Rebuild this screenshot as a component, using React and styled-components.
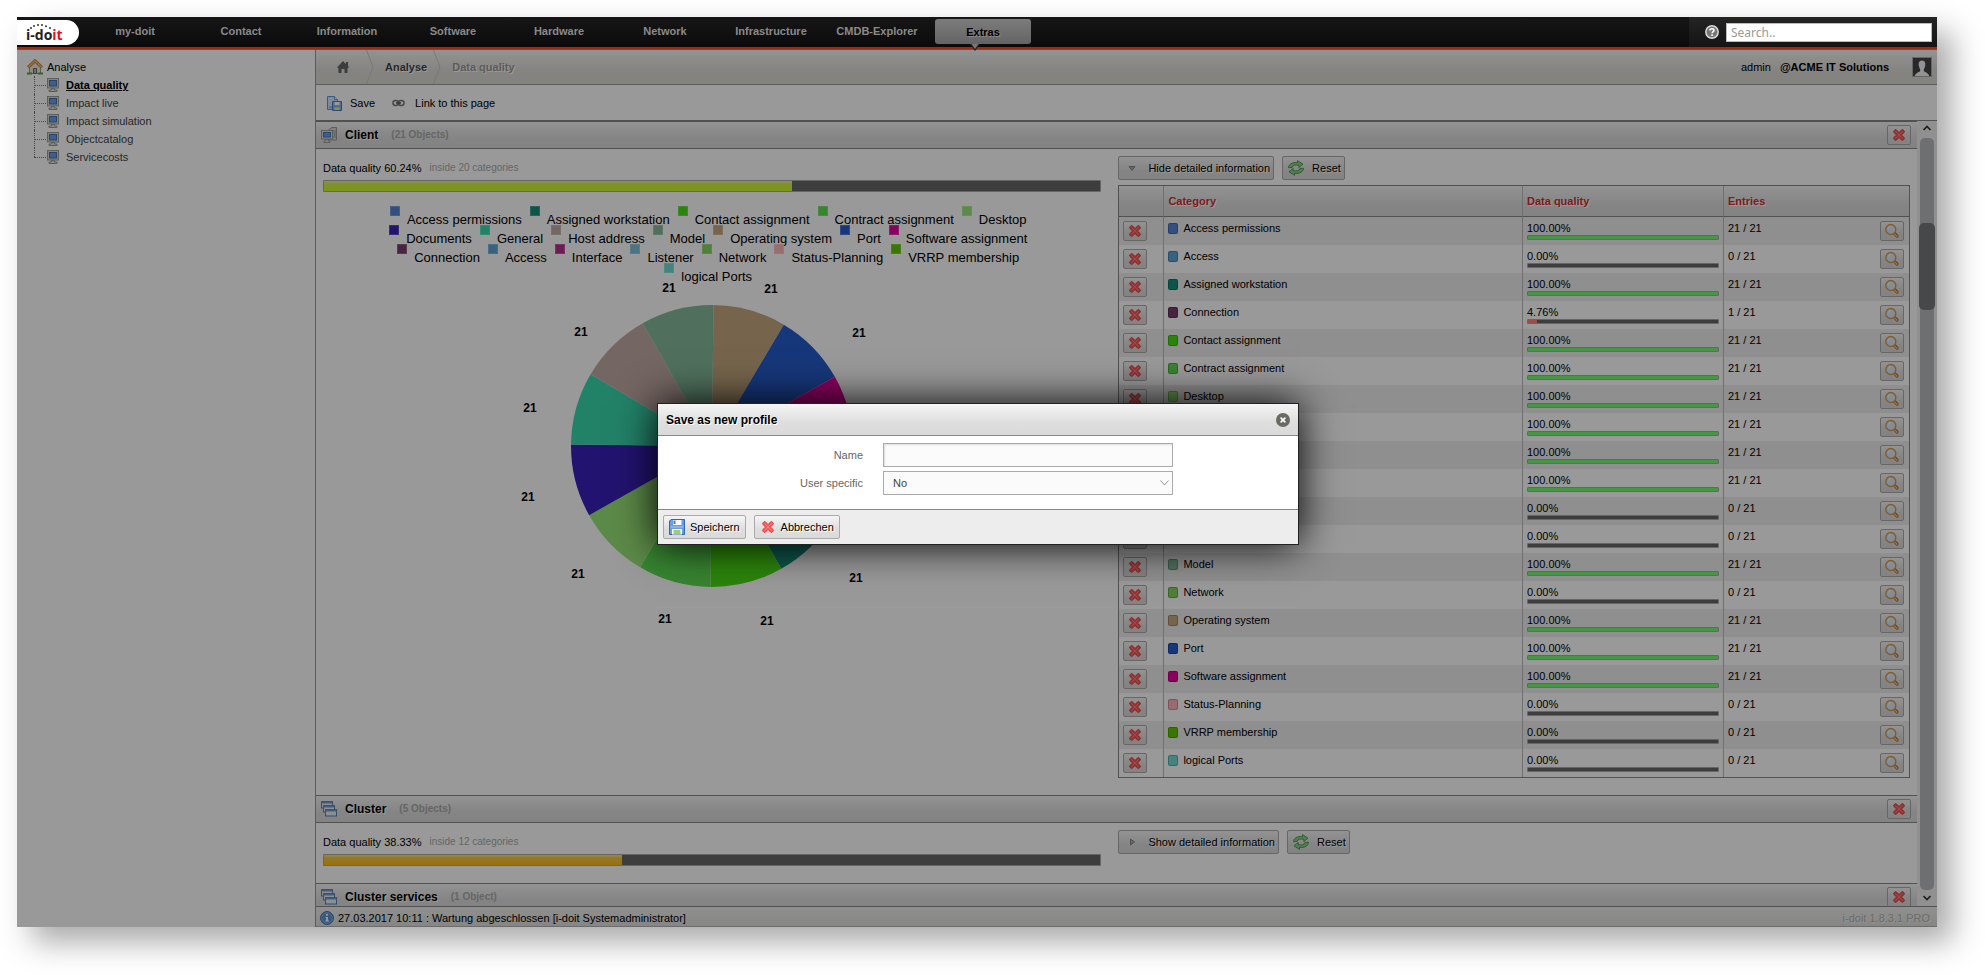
import React from "react";
import styled, { createGlobalStyle, css } from "styled-components";

const GlobalStyle = createGlobalStyle`
  *, *::before, *::after { box-sizing: border-box; }
  body {
    margin: 0;
    background: #fff;
    color: #000;
    font: 11px/18px "Liberation Sans", Arial, Helvetica, sans-serif;
  }
  svg { display: block; flex: none; }
  button, input, select { font: inherit; color: inherit; }
  a { color: inherit; text-decoration: none; }
  ul, ol, h1, h2 { margin: 0; padding: 0; list-style: none; font-size: inherit; }
`;

const raised = css`
  background: linear-gradient(#f5f5f5, #dedede 60%, #dadada);
  text-shadow: 1px 1px 0 #fff;
`;

/* ---------- data ---------- */

const COLORS = {
  "Access permissions": "#5484d4",
  Access: "#5ea6d6",
  "Assigned workstation": "#178e7d",
  Connection: "#783c6c",
  "Contact assignment": "#48de11",
  "Contract assignment": "#5ddc53",
  Desktop: "#99e678",
  Documents: "#3921bb",
  General: "#3ad9ad",
  "Host address": "#c1aaa3",
  Interface: "#b82d8c",
  Listener: "#7cc0dc",
  Model: "#85bb9b",
  Network: "#86d45e",
  "Operating system": "#c5a87f",
  Port: "#255ccb",
  "Software assignment": "#e6009e",
  "Status-Planning": "#ffb4ba",
  "VRRP membership": "#5fc800",
  "logical Ports": "#70dcd4",
};

const LEGEND = [
  ["Access permissions", "Assigned workstation", "Contact assignment", "Contract assignment", "Desktop"],
  ["Documents", "General", "Host address", "Model", "Operating system", "Port", "Software assignment"],
  ["Connection", "Access", "Interface", "Listener", "Network", "Status-Planning", "VRRP membership"],
  ["logical Ports"],
];

const SLICES = [...LEGEND[0], ...LEGEND[1]];

const ENTRIES = { Access: 0, Connection: 1, Interface: 0, Listener: 0, Network: 0, "Status-Planning": 0, "VRRP membership": 0, "logical Ports": 0 };
const ROWS = Object.keys(COLORS).map((name) => ({ name, entries: ENTRIES[name] ?? 21 }));

const MENU = ["my-doit", "Contact", "Information", "Software", "Hardware", "Network", "Infrastructure", "CMDB-Explorer", "Extras"];
const TREE = ["Data quality", "Impact live", "Impact simulation", "Objectcatalog", "Servicecosts"];

/* ---------- icons ---------- */

const Cross = () => (
  <svg width="16" height="16" viewBox="0 0 16 16">
    <path d="M2.500 4.300 4.300 2.500 5.500 2.900 8 5.600 10.500 2.900 11.700 2.500 13.500 4.300 13.100 5.500 10.400 8 13.100 10.500 13.500 11.700 11.700 13.500 10.500 13.100 8 10.400 5.500 13.100 4.300 13.500 2.500 11.700 2.900 10.500 5.600 8 2.900 5.500Z" fill="#f95a5a" stroke="#ea4040" strokeLinejoin="round" />
    <path d="M4.500 4.500 11.500 11.500M11.500 4.500 4.500 11.500" stroke="#ff7d7d" />
  </svg>
);

const Magnifier = () => (
  <svg width="16" height="16" viewBox="0 0 16 16">
    <path d="M10.200 10 13 13" stroke="#b06a28" strokeWidth="3.200" strokeLinecap="round" />
    <path d="M10.400 10.400 13 13.200" stroke="#f5c078" strokeWidth="1.400" strokeLinecap="round" />
    <circle cx="6.800" cy="6.500" r="5" fill="#dcebf5" stroke="#d89a50" strokeWidth="1.400" />
    <path d="M4 6.500A3 3 0 0 1 7 3.600" fill="none" stroke="#fff" />
  </svg>
);

const Refresh = () => (
  <svg width="16" height="16" viewBox="0 0 16 16" strokeLinejoin="round" strokeWidth=".8">
    <path d="M.5 7.800C.8 4 4.500 2 9.500 2.600V.6L15 4.200 10.800 7.600V5.400C7 4.600 4.800 5 4.200 7.400Z" fill="#8ad484" stroke="#3a8f40" />
    <path d="M15.500 8.200C15.200 12 11.500 14 6.500 13.400V15.400L1 11.800 5.200 8.400V10.600C9 11.400 11.200 11 11.800 8.600Z" fill="#8ad484" stroke="#3a8f40" />
  </svg>
);

const Triangle = ({ open }) => (
  <svg width="16" height="16" viewBox="0 0 16 16">
    <path d={open ? "M5 6.500H11L8 10.500Z" : "M6.500 5V11L10.500 8Z"} fill="#aaa" stroke="#888" />
  </svg>
);

const Floppy = () => (
  <svg width="16" height="16" viewBox="0 0 16 16">
    <path d="M2 .5H15.500V15.500H.5V2Z" fill="#6b9de0" stroke="#3465b4" />
    <path d="M4 1H12.500V6H4Z" fill="#f4f8ff" />
    <path d="M5.500 1.500V5" stroke="#4a7cc8" strokeWidth="2" />
    <path d="M1.500 8H14.500" stroke="#a9c8f3" />
    <path d="M3 10H13V15.500H3Z" fill="#fff" />
    <path d="M4.500 12H11.500M4.500 14H11.500" stroke="#77c043" strokeWidth="1.300" />
  </svg>
);

const SaveCopy = () => (
  <svg width="16" height="16" viewBox="0 0 16 16">
    <path d="M1.500 1.500H8.500L11.500 4.500V14.500H1.500Z" fill="#d6e8fc" stroke="#5c98e0" />
    <path d="M8.500 1.500V4.500H11.500" fill="#fff" stroke="#5c98e0" />
    <path d="M3 11H6V13.500H3Z" fill="#8cc4f8" />
    <path d="M6.500 6.500H15.500V15.500H6.500Z" fill="#8ab4ec" stroke="#4a7cc8" />
    <path d="M8.500 7H13.500V10H8.500Z" fill="#fff" />
    <path d="M8.500 12.500H13.500V15H8.500Z" fill="#eef080" />
  </svg>
);

const LinkIcon = () => (
  <svg width="13" height="8" viewBox="0 0 13 8" fill="none">
    <rect x="1" y="1.500" width="5.500" height="5" rx="2.500" stroke="#777" strokeWidth="1.500" />
    <rect x="6.500" y="1.500" width="5.500" height="5" rx="2.500" stroke="#777" strokeWidth="1.500" />
    <path d="M4 4H9" stroke="#555" strokeWidth="1.500" />
  </svg>
);

const Monitor = () => (
  <svg width="16" height="16" viewBox="0 0 16 16">
    <rect x="2.500" y="1.500" width="11" height="9.500" fill="#dcdcd4" stroke="#a0a098" />
    <rect x="4.500" y="3.500" width="7" height="5.500" fill="#6a9de4" stroke="#4272b8" />
    <path d="M6.500 11.500H9.500V13H12V14.500H4V13H6.500Z" fill="#e4e4dc" stroke="#9a9a92" />
  </svg>
);

const ClientIcon = () => (
  <svg width="16" height="16" viewBox="0 0 16 16">
    <path d="M8 2.500 11 .5H15.500V13H8Z" fill="#d8d8d8" stroke="#999" />
    <path d="M12 4H15M12 6H15M12 10H15" stroke="#999" />
    <path d="M13 8H14.500" stroke="#4ab94a" strokeWidth="1.500" />
    <rect x=".5" y="3.500" width="11" height="8.500" fill="#e2e2e2" stroke="#999" />
    <rect x="2.500" y="5.500" width="7" height="4.500" fill="#6a9de4" stroke="#4272b8" />
    <path d="M4.500 12.500H7.500V14H9V15.500H3V14H4.500Z" fill="#ddd" stroke="#999" />
  </svg>
);

const Windows = () => (
  <svg width="16" height="16" viewBox="0 0 16 16">
    {[[0.5, 0.5], [2.5, 4.5], [4.5, 8.5]].map(([x, y]) => (
      <g key={x}>
        <rect x={x} y={y} width="11" height="6.500" fill="#eaeef4" stroke="#5580b5" />
        <path d={`M${x} ${y + 1}H${x + 11}`} stroke="#6d9ad2" strokeWidth="2" />
      </g>
    ))}
  </svg>
);

const House = () => (
  <svg width="16" height="16" viewBox="0 0 16 16">
    <path d="M2.500 7.500 8 2.500 13.500 7.500V14.500H2.500Z" fill="#ece8dc" stroke="#999" />
    <path d="M6.500 9.500H9.500V14.500H6.500Z" fill="#b8b8b8" stroke="#666" />
    <path d="M1 8.300 8 1.800 15 8.300" fill="none" stroke="#b8782c" strokeWidth="3" />
    <path d="M1 8.300 8 1.800 15 8.300" fill="none" stroke="#f5b868" strokeWidth="1.600" />
    <path d="M0 14.500H5M11 14.500H16" stroke="#4fa34f" strokeWidth="2" />
  </svg>
);

const HomeGlyph = () => (
  <svg width="12" height="12" viewBox="0 0 12 12">
    <path d="M6 0 9 3V1H11V5L12 6.500 10.500 7V12H7.500V8H4.500V12H1.500V7L0 6.500Z" fill="#666" />
  </svg>
);

const Separator = () => (
  <svg width="8" height="34" viewBox="0 0 8 34">
    <path d="M.5 0 7 17 .5 34" fill="none" stroke="#c8c8c4" />
  </svg>
);

const Info = () => (
  <svg width="14" height="14" viewBox="0 0 14 14">
    <circle cx="7" cy="7" r="6.400" fill="#5f93d0" stroke="#3c6cab" />
    <circle cx="7" cy="7" r="5.300" fill="none" stroke="#90b8e6" strokeWidth=".8" />
    <circle cx="7" cy="3.800" r="1.100" fill="#fff" />
    <path d="M5.500 6H8V9.500H9V10.500H5.200V9.500H6.200V7H5.500Z" fill="#fff" />
  </svg>
);

const Help = () => (
  <svg width="14" height="14" viewBox="0 0 14 14">
    <circle cx="7" cy="7" r="6.200" fill="#777" stroke="#d8d8d8" strokeWidth="1.500" />
    <path d="M4.900 5.500C5 3 9.200 3.200 9 5.400 8.900 6.600 7.200 6.700 7.100 8.200M7.100 9.300V10.900" fill="none" stroke="#fff" strokeWidth="1.500" />
  </svg>
);

const CloseGlyph = () => (
  <svg width="14" height="14" viewBox="0 0 14 14">
    <circle cx="7" cy="7" r="7" fill="#696b63" />
    <path d="M4.600 4.600 9.400 9.400M9.400 4.600 4.600 9.400" stroke="#fff" strokeWidth="1.500" />
  </svg>
);

const Avatar = () => (
  <svg width="20" height="20" viewBox="0 0 20 20">
    <rect x=".5" y=".5" width="19" height="19" fill="#444" stroke="#aaa" />
    <path d="M10 3.500C13.400 3.500 13.700 7 13 9.500 12.500 11.500 11.700 12 11.800 13.700 12 15 16.500 15.500 17.200 19H2.800C3.500 15.500 8 15 8.200 13.700 8.300 12 7.500 11.500 7 9.500 6.300 7 6.600 3.500 10 3.500Z" fill="#f4f4f4" />
  </svg>
);

const Caret = ({ up }) => (
  <svg width="10" height="6" viewBox="0 0 10 6">
    <path d={up ? "M1.500 5 5 1.500 8.500 5" : "M1.500 1 5 4.500 8.500 1"} fill="none" stroke="#333" strokeWidth="1.700" />
  </svg>
);

/* ---------- shell ---------- */

const Page = styled.div`
  height: 100vh;
  padding: 17px 48px 48px 17px;
  overflow: hidden;
`;

const Shell = styled.div`
  position: relative;
  display: flex;
  flex-direction: column;
  height: 100%;
  background: #fff;
  box-shadow: 15px 15px 29px rgba(0, 0, 0, 0.34);
`;

const TopBar = styled.header`
  position: relative;
  z-index: 2;
  display: flex;
  height: 33px;
  background: linear-gradient(#161616, #0a0a0a);
  border-bottom: 1px solid #555;
  box-shadow: inset 0 -2px 0 #9c2b17;
`;

const Logo = styled.a`
  display: flex;
  align-items: center;
  width: 62px;
  height: 25px;
  margin: 3px 3px 0 0;
  padding-left: 8px;
  background: #fff;
  border-radius: 0 13px 13px 0;
`;

const LogoText = styled.text`
  font: bold 14px "Open Sans", sans-serif;
  fill: #222;
`;

const Menu = styled.nav`
  display: flex;
  flex: 1;
`;

const MenuLink = styled.a`
  position: relative;
  width: 96px;
  height: 25px;
  margin: 2px 5px 0;
  border-radius: 3px;
  color: #8a8a8a;
  font-weight: bold;
  line-height: 24px;
  text-align: center;
  ${(p) => p.$active && css`
    background: linear-gradient(#7c7c7c, #646464);
    color: #000;
    line-height: 26px;
    text-shadow: 1px 1px 0 #888;
  `}
`;

const Pointer = styled.svg`
  position: absolute;
  left: 35px;
  top: 25px;
`;

const SearchArea = styled.form`
  display: flex;
  align-items: center;
  gap: 7px;
  width: 248px;
  height: 30px;
  padding: 0 5px 0 16px;
  background: linear-gradient(#242424, #141414);
`;

const SearchInput = styled.input`
  flex: 1;
  min-width: 0;
  height: 19px;
  padding: 0 4px;
  border: 1px solid #bbb;
  background: #fff;
  font: 12px "Noto Sans", "Open Sans", sans-serif;
  &::placeholder { color: #999; opacity: 1; }
`;

const Body = styled.div`
  display: flex;
  flex: 1;
  min-height: 0;
`;

const Sidebar = styled.aside`
  width: 299px;
  flex: none;
  padding: 8px 10px;
  border-right: 1px solid #999;
`;

const TreeRoot = styled.a`
  display: flex;
  align-items: center;
  gap: 4px;
`;

const TreeList = styled.ul`
  margin-left: 7px;
`;

const TreeItem = styled.li`
  position: relative;
  display: flex;
  align-items: center;
  gap: 5px;
  height: 18px;
  padding-left: 11px;
  &::before {
    content: "";
    position: absolute;
    left: 0;
    top: 0;
    height: ${(p) => (p.$last ? "9px" : "18px")};
    border-left: 1px dotted #777;
  }
  &::after {
    content: "";
    position: absolute;
    left: 0;
    top: 9px;
    width: 12px;
    border-top: 1px dotted #777;
  }
  a {
    color: ${(p) => (p.$active ? "#000" : "#444")};
    font-weight: ${(p) => (p.$active ? "bold" : "normal")};
    text-decoration: ${(p) => (p.$active ? "underline" : "none")};
  }
`;

const Main = styled.main`
  display: flex;
  flex: 1;
  flex-direction: column;
  min-width: 0;
`;

const CrumbBar = styled.div`
  display: flex;
  align-items: center;
  justify-content: space-between;
  height: 35px;
  flex: none;
  padding: 0 5px 0 21px;
  border-bottom: 1px solid #999;
  background: linear-gradient(#f5f5f5, #dddcd7 60%, #dad9d3);
`;

const Crumbs = styled.nav`
  display: flex;
  align-items: center;
  gap: 11px;
  color: #999;
  font-weight: bold;
  text-shadow: 1px 1px 0 #fff;
  a { color: #444; }
  a:first-child { margin-right: 6px; }
  a + svg + a { margin: 0 -5px 0 0; }
`;

const User = styled.div`
  display: flex;
  align-items: center;
  gap: 9px;
  svg { margin-left: 14px; }
`;

const Toolbar = styled.div`
  display: flex;
  align-items: center;
  gap: 17px;
  height: 36px;
  flex: none;
  padding: 0 10px;
  border-bottom: 1px solid #888;
`;

const ToolLink = styled.a`
  display: flex;
  align-items: center;
  gap: ${(p) => p.$gap}px;
`;

const ScrollPane = styled.div`
  display: flex;
  flex: 1;
  min-height: 0;
`;

const Content = styled.div`
  flex: 1;
  min-width: 0;
  overflow: hidden;
`;

const ScrollBar = styled.div`
  display: flex;
  flex-direction: column;
  align-items: center;
  justify-content: space-between;
  width: 20px;
  padding: 4px 0 5px;
  background: #f0f0f0;
`;

const Track = styled.div`
  flex: 1;
  width: 14px;
  margin: 7px 0 5px;
  padding-top: 85px;
  border-radius: 5px;
  background: #b8babc;
`;

const Thumb = styled.div`
  width: 16px;
  height: 87px;
  margin-left: -1px;
  border-radius: 5px;
  background: #77797b;
`;

const StatusBar = styled.footer`
  display: flex;
  align-items: center;
  height: 21px;
  flex: none;
  gap: 4px;
  padding: 2px 7px 0 4px;
  border-top: 1px solid #888;
  border-bottom: 1px solid #b5b5b5;
  background: linear-gradient(#f0f0f0, #dfdfdb);
`;

const Version = styled.span`
  margin-left: auto;
  color: #b4b4b4;
  text-shadow: 1px 1px 0 #f5f5f5;
`;

/* ---------- controls ---------- */

const Button = styled.button`
  display: flex;
  align-items: center;
  gap: ${(p) => (p.$wide ? 8 : 5)}px;
  height: 24px;
  padding: 0 ${(p) => (p.$wide ? 3 : 5)}px 0 5px;
  border: 1px solid #aaa;
  border-radius: 2px;
  white-space: nowrap;
  ${raised}
`;

const IconButton = styled.button`
  display: flex;
  align-items: center;
  justify-content: center;
  width: 24px;
  height: 20px;
  padding: 0;
  border: 1px solid #aaa;
  border-radius: 2px;
  ${raised}
`;

const Bar = styled.div`
  height: ${(p) => (p.$small ? 5 : 12)}px;
  border: 1px solid #aaa;
  border-radius: 1px;
  background: #666;
`;

const BarFill = styled.div`
  height: 100%;
  background: ${(p) => p.$paint};
`;

/* ---------- quality sections ---------- */

const SectionHead = styled.div`
  display: flex;
  align-items: center;
  gap: 8px;
  height: 28px;
  padding: 0 6px 0 5px;
  border: solid #888;
  border-width: 1px 0;
  ${raised}
  h2 { font-size: 12px; }
  button { margin-left: auto; }
`;

const Count = styled.span`
  margin-left: 5px;
  color: #aaa;
  font-size: 10px;
  font-weight: bold;
  text-shadow: none;
`;

const SectionBody = styled.div`
  display: grid;
  grid-template-columns: 59fr 60fr;
  gap: 17px;
  padding: 7px 7px 17px;
`;

const Summary = styled.p`
  display: flex;
  align-items: center;
  gap: 8px;
  height: 24px;
  margin: 0;
  small { color: #aaa; font-size: 10px; }
`;

const Actions = styled.div`
  display: flex;
  gap: 8px;
`;

const Legend = styled.div`
  padding: 14px 8px 0 0;
`;

const LegendRow = styled.div`
  display: flex;
  justify-content: center;
  gap: 8px;
`;

const LegendItem = styled.span`
  display: flex;
  gap: 7px;
  height: 19px;
  padding-top: 9px;
  font-size: 13px;
  line-height: 10px;
  &::before {
    content: "";
    width: 10px;
    height: 10px;
    margin-top: -9px;
    background: ${(p) => p.$color};
    outline: 1px solid #ffffff33;
    outline-offset: -1px;
  }
`;

const Chart = styled.svg`
  display: block;
  margin: -22px auto 0;
  text {
    font: bold 12px "Liberation Sans", Arial, sans-serif;
    text-anchor: middle;
  }
`;

const Table = styled.table`
  width: 100%;
  margin-top: 5px;
  border: 1px solid #888;
  border-spacing: 0;
  border-collapse: separate;
  table-layout: fixed;
  line-height: 14px;
  th {
    height: 31px;
    padding: 0 4px;
    border-bottom: 1px solid #888;
    color: #d22f2f;
    text-align: left;
    ${raised}
  }
  td {
    height: 28px;
    padding: 4px 4px 0;
    vertical-align: top;
  }
  th:not(:first-child), td:not(:first-child) { border-left: 1px solid #bbb; }
  td:last-child { padding-right: 5px; }
  tbody tr:nth-child(odd) { background: #eee; }
`;

const CheckCol = styled.col`width: 44px;`;
const QualityCol = styled.col`width: 201px;`;
const EntriesCol = styled.col`width: 186px;`;

const Category = styled.span`
  display: flex;
  align-items: center;
  gap: 5px;
  &::before {
    content: "";
    width: 10px;
    height: 11px;
    border: 1px solid #00000033;
    border-radius: 2px;
    background: ${(p) => p.$color};
  }
`;

const EntryCell = styled.div`
  display: flex;
  justify-content: space-between;
`;

/* ---------- dialog ---------- */

const Backdrop = styled.div`
  position: absolute;
  inset: 0;
  z-index: 1;
  display: grid;
  place-items: center;
  padding: 4px 0 0 2px;
  background: rgba(0, 0, 0, 0.4);
`;

const Dialog = styled.form`
  width: 642px;
  border: 1px solid #222;
  background: #fff;
  box-shadow: 0 0 38px #000;
`;

const DialogHead = styled.div`
  display: flex;
  align-items: center;
  justify-content: space-between;
  height: 32px;
  padding: 0 8px;
  border-bottom: 1px solid #888;
  ${raised}
  h1 { font-size: 12px; }
`;

const CloseButton = styled.button`
  padding: 0;
  border: 0;
  background: none;
`;

const Fields = styled.div`
  display: grid;
  grid-template-columns: 205px 290px;
  align-items: center;
  gap: 4px 20px;
  padding: 7px 0 14px;
  color: #666;
  label { text-align: right; }
`;

const fieldBox = css`
  width: 100%;
  height: 24px;
  border: 1px solid #aaa;
  border-radius: 0;
  background: #fbfbfb;
  color: #444;
  padding: 0 9px;
`;

const TextInput = styled.input`
  ${fieldBox}
  box-shadow: inset 1px 1px 2px #ddd;
`;

const SelectWrap = styled.div`
  position: relative;
  svg { position: absolute; right: 4px; top: 9px; }
`;

const Select = styled.select`
  ${fieldBox}
  display: block;
  appearance: none;
`;

const DialogFoot = styled.div`
  display: flex;
  gap: 8px;
  padding: 5px;
  border-top: 1px solid #888;
  background: #ededed;
`;

/* ---------- parts ---------- */

const PIE_LABELS = [
  [149, 32], [251, 33], [339, 77], [61, 76], [10, 152], [8, 241], [58, 318], [145, 363], [247, 365], [336, 322],
];

function Pie() {
  const cx = 192;
  const cy = 186;
  const r = 141;
  const at = (deg) => {
    const a = ((deg + 0.6) * Math.PI) / 180;
    return `${cx + r * Math.cos(a)} ${cy + r * Math.sin(a)}`;
  };
  return (
    <Chart width="384" height="380" viewBox="0 0 384 380" overflow="visible">
      {SLICES.map((name, i) => (
        <path key={name} d={`M${cx} ${cy}L${at(i * 30)}A${r} ${r} 0 0 1 ${at(i * 30 + 30)}Z`} fill={COLORS[name]} />
      ))}
      {PIE_LABELS.map(([x, y]) => (
        <text key={x} x={x} y={y}>21</text>
      ))}
    </Chart>
  );
}

function SectionHeader({ icon, title, count }) {
  return (
    <SectionHead>
      {icon}
      <h2>{title}</h2>
      <Count>({count})</Count>
      <IconButton type="button" aria-label={`Remove ${title}`}><Cross /></IconButton>
    </SectionHead>
  );
}

function Quality({ percent, categories, paint, children }) {
  return (
    <div>
      <Summary>Data quality {percent}% <small>inside {categories} categories</small></Summary>
      <Bar><BarFill $paint={paint} style={{ width: `${percent}%` }} /></Bar>
      {children}
    </div>
  );
}

function DetailActions({ open }) {
  return (
    <Actions>
      <Button type="button" $wide><Triangle open={open} />{open ? "Hide" : "Show"} detailed information</Button>
      <Button type="button" $wide><Refresh />Reset</Button>
    </Actions>
  );
}

function DetailTable() {
  return (
    <Table>
      <colgroup>
        <CheckCol />
        <col />
        <QualityCol />
        <EntriesCol />
      </colgroup>
      <thead>
        <tr><th /><th>Category</th><th>Data quality</th><th>Entries</th></tr>
      </thead>
      <tbody>
        {ROWS.map(({ name, entries }) => {
          const pct = ((entries / 21) * 100).toFixed(2);
          return (
            <tr key={name}>
              <td><IconButton type="button" aria-label={`Remove ${name}`}><Cross /></IconButton></td>
              <td><Category $color={COLORS[name]}>{name}</Category></td>
              <td>
                {pct}%
                <Bar $small><BarFill $paint={entries === 21 ? "#73fb73" : "#ff8078"} style={{ width: `${pct}%` }} /></Bar>
              </td>
              <td>
                <EntryCell>
                  {entries} / 21
                  <IconButton type="button" aria-label={`Show ${name}`}><Magnifier /></IconButton>
                </EntryCell>
              </td>
            </tr>
          );
        })}
      </tbody>
    </Table>
  );
}

function ProfileDialog() {
  return (
    <Dialog role="dialog" aria-labelledby="dialog-title">
      <DialogHead>
        <h1 id="dialog-title">Save as new profile</h1>
        <CloseButton type="button" aria-label="Close"><CloseGlyph /></CloseButton>
      </DialogHead>
      <Fields>
        <label htmlFor="profile-name">Name</label>
        <TextInput id="profile-name" type="text" />
        <label htmlFor="profile-user">User specific</label>
        <SelectWrap>
          <Select id="profile-user" defaultValue="No">
            <option>No</option>
            <option>Yes</option>
          </Select>
          <svg width="9" height="6" viewBox="0 0 9 6"><path d="M.5 .5 4.500 5 8.500 .5" fill="none" stroke="#999" /></svg>
        </SelectWrap>
      </Fields>
      <DialogFoot>
        <Button type="button"><Floppy />Speichern</Button>
        <Button type="button"><Cross />Abbrechen</Button>
      </DialogFoot>
    </Dialog>
  );
}

export default function App() {
  return (
    <Page>
      <GlobalStyle />
      <Shell>
        <TopBar>
          <Logo href="#" aria-label="i-doit">
            <svg width="40" height="20" viewBox="0 0 40 20">
              <LogoText x="1" y="17">i-do<tspan fill="#e8101c">it</tspan></LogoText>
              <g fill="#333">
                <circle cx="6" cy="5" r="1" /><circle cx="9" cy="3" r="1" /><circle cx="13" cy="2" r="1" />
                <circle cx="17" cy="2" r="1" /><circle cx="21" cy="3.200" r="1" /><circle cx="25" cy="5" r="1" />
              </g>
            </svg>
          </Logo>
          <Menu>
            {MENU.map((m) => (
              <MenuLink key={m} href="#" $active={m === "Extras"}>
                {m}
                {m === "Extras" && (
                  <Pointer width="10" height="7" viewBox="0 0 10 7">
                    <path d="M0 0 5 7 10 0Z" fill="#222" />
                    <path d="M1.500 0 5 5 8.500 0Z" fill="#777" />
                  </Pointer>
                )}
              </MenuLink>
            ))}
          </Menu>
          <SearchArea>
            <Help />
            <SearchInput type="search" placeholder="Search.." aria-label="Search" />
          </SearchArea>
        </TopBar>
        <Body>
          <Sidebar>
            <TreeRoot href="#"><House />Analyse</TreeRoot>
            <TreeList>
              {TREE.map((t, i) => (
                <TreeItem key={t} $active={i === 0} $last={i === TREE.length - 1}>
                  <Monitor /><a href="#">{t}</a>
                </TreeItem>
              ))}
            </TreeList>
          </Sidebar>
          <Main>
            <CrumbBar>
              <Crumbs>
                <a href="#" aria-label="Home"><HomeGlyph /></a>
                <Separator />
                <a href="#">Analyse</a>
                <Separator />
                <span>Data quality</span>
              </Crumbs>
              <User>admin <b>@ACME IT Solutions</b><Avatar /></User>
            </CrumbBar>
            <Toolbar>
              <ToolLink href="#" $gap={8}><SaveCopy />Save</ToolLink>
              <ToolLink href="#" $gap={10}><LinkIcon />Link to this page</ToolLink>
            </Toolbar>
            <ScrollPane>
              <Content>
                <SectionHeader icon={<ClientIcon />} title="Client" count="21 Objects" />
                <SectionBody>
                  <Quality percent="60.24" categories={20} paint="linear-gradient(#eef58a, #d8ee50 30%, #cbff1c)">
                    <Legend>
                      {LEGEND.map((row) => (
                        <LegendRow key={row[0]}>
                          {row.map((n) => <LegendItem key={n} $color={COLORS[n]}>{n}</LegendItem>)}
                        </LegendRow>
                      ))}
                    </Legend>
                    <Pie />
                  </Quality>
                  <div>
                    <DetailActions open />
                    <DetailTable />
                  </div>
                </SectionBody>
                <SectionHeader icon={<Windows />} title="Cluster" count="5 Objects" />
                <SectionBody>
                  <Quality percent="38.33" categories={12} paint="linear-gradient(#ffe28a, #f5c844 30%, #ffbd10)" />
                  <DetailActions />
                </SectionBody>
                <SectionHeader icon={<Windows />} title="Cluster services" count="1 Object" />
              </Content>
              <ScrollBar aria-hidden="true">
                <Caret up />
                <Track><Thumb /></Track>
                <Caret />
              </ScrollBar>
            </ScrollPane>
            <StatusBar>
              <Info />
              27.03.2017 10:11 : Wartung abgeschlossen [i-doit Systemadministrator]
              <Version>i-doit 1.8.3.1 PRO</Version>
            </StatusBar>
          </Main>
        </Body>
        <Backdrop><ProfileDialog /></Backdrop>
      </Shell>
    </Page>
  );
}
